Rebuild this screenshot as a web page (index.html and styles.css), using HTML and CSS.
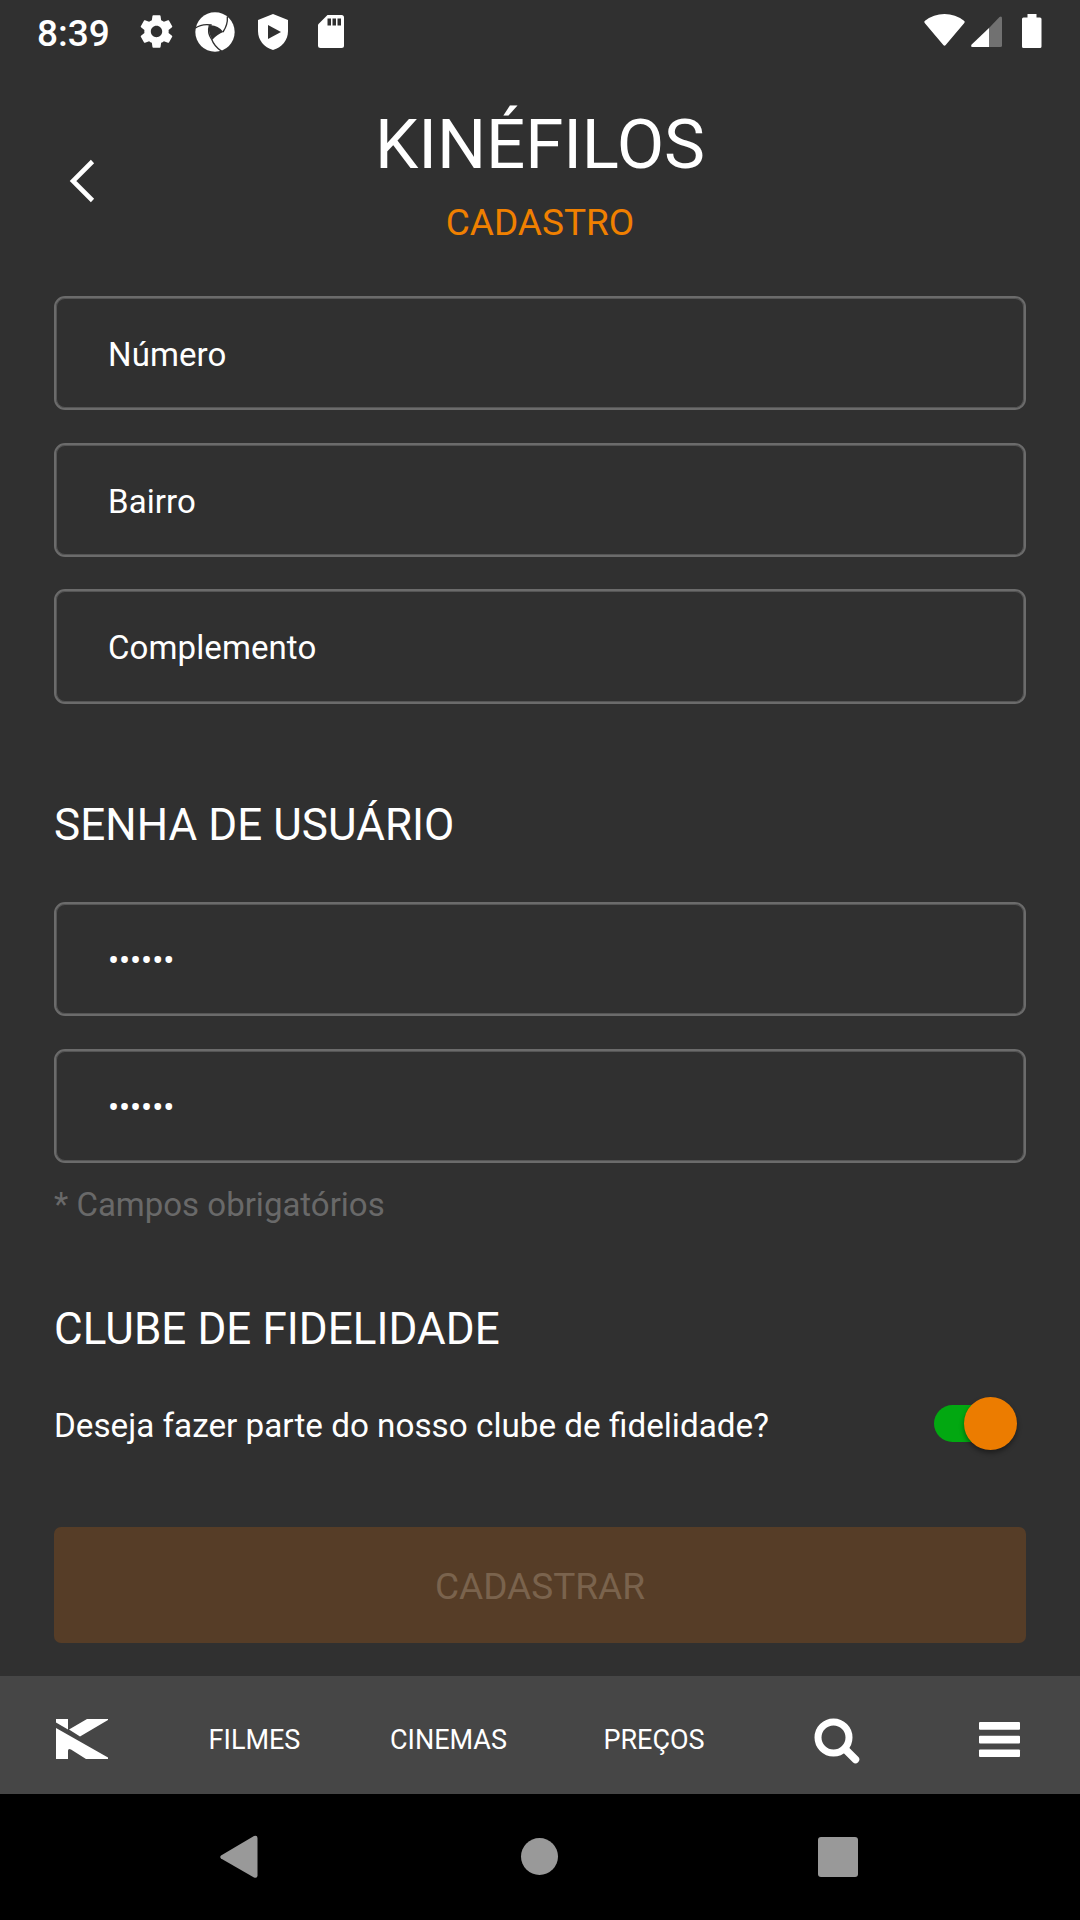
FILE: index.html
```html
<!DOCTYPE html>
<html lang="pt-BR">
<head>
<meta charset="utf-8">
<title>Kinéfilos</title>
<link rel="stylesheet" href="styles.css">
</head>
<body>
<div class="status">
  <span class="clock">8:39</span>
  <svg class="gear" width="39" height="39" viewBox="0 0 24 24"><path fill="#fff" d="M19.43 12.98c.04-.32.07-.64.07-.98s-.03-.66-.07-.98l2.11-1.65c.19-.15.24-.42.12-.64l-2-3.46c-.12-.22-.39-.3-.61-.22l-2.49 1c-.52-.4-1.08-.73-1.69-.98l-.38-2.65C14.46 2.18 14.25 2 14 2h-4c-.25 0-.46.18-.49.42l-.38 2.65c-.61.25-1.17.59-1.69.98l-2.49-1c-.23-.09-.49 0-.61.22l-2 3.46c-.13.22-.07.49.12.64l2.11 1.65c-.04.32-.07.65-.07.98s.03.66.07.98l-2.11 1.65c-.19.15-.24.42-.12.64l2 3.46c.12.22.39.3.61.22l2.49-1c.52.4 1.08.73 1.69.98l.38 2.65c.03.24.24.42.49.42h4c.25 0 .46-.18.49-.42l.38-2.65c.61-.25 1.17-.59 1.69-.98l2.49 1c.23.09.49 0 .61-.22l2-3.46c.12-.22.07-.49-.12-.64l-2.11-1.65zM12 15.5c-1.93 0-3.5-1.57-3.5-3.5s1.57-3.5 3.500-3.500 3.500 1.57 3.500 3.500-1.57 3.500-3.500 3.500z"/></svg>
  <svg class="swirl" width="40" height="40" viewBox="0 0 120 120"><circle cx="60" cy="60" r="59" fill="#fff"/><path fill="#303030" d="M43 40Q68 38 85 60Q68 66 52 83Q38 62 43 40Z"/><path fill="none" stroke="#303030" stroke-width="4" d="M0 49Q20 34 50 39M97 14Q99 38 84 60M43 40Q36 62 50 82Q58 104 80 118"/></svg>
  <svg class="shield" width="30" height="36" viewBox="0 0 30 36"><path fill="#fff" d="M15 0L30 6V17C30 26 24 33.500 15 36C6 33.500 0 26 0 17V6Z"/><path fill="#303030" d="M10 11V25L23 18Z"/></svg>
  <svg class="sd" width="26" height="33" viewBox="0 0 26 33"><path fill="#fff" d="M9.500 0H23.500Q26 0 26 2.500V30.500Q26 33 23.500 33H2.500Q0 33 0 30.500V9.500Z"/><path fill="#303030" d="M9.500 3.500h3.500v7H9.500zM14.500 3.500h3.500v7h-3.500zM19.500 3.500h3.500v7h-3.500z"/></svg>
  <svg class="wifi" width="41" height="32" viewBox="0 0 41 32"><path fill="#fff" d="M.7 9Q-.4 7.800 1 6.800Q9.500 0 20.500 0T40 6.800Q41.400 7.800 40.300 9L21.700 31Q20.500 32.300 19.300 31Z"/></svg>
  <svg class="signal" width="31" height="31" viewBox="0 0 31 31"><path fill="#717171" d="M18 31V12L28.500 1Q31-.5 31 2.500V29.500Q31 31 29.500 31Z"/><path fill="#fff" d="M18 31V12L.7 28.500Q-.8 31 1.500 31Z"/></svg>
  <svg class="battery" width="20" height="34" viewBox="0 0 20 34"><path fill="#fff" d="M5.500 0H14.500V3.500H18Q19.500 3.500 19.500 5V32.500Q19.500 34 18 34H1.500Q0 34 0 32.500V5Q0 3.500 1.500 3.500H5.500Z"/></svg>
</div>

<header class="header">
  <svg class="back" width="26" height="44" viewBox="0 0 26 44"><path fill="none" stroke="#fff" stroke-width="4.600" d="M22.500 2.500L3 22L22.500 41.500"/></svg>
  <div class="titles">
    <h1 class="title">KINÉFILOS</h1>
    <div class="subtitle">CADASTRO</div>
  </div>
</header>

<main class="form">
  <div class="fields">
    <div class="field">Número</div>
    <div class="field">Bairro</div>
    <div class="field last">Complemento</div>
  </div>
  <h2 class="heading password-heading">SENHA DE USUÁRIO</h2>
  <div class="fields">
    <div class="field secret">••••••</div>
    <div class="field secret">••••••</div>
  </div>
  <p class="note">* Campos obrigatórios</p>
  <h2 class="heading club-heading">CLUBE DE FIDELIDADE</h2>
  <div class="club">
    <span class="question">Deseja fazer parte do nosso clube de fidelidade?</span>
    <span class="switch"><span class="knob"></span></span>
  </div>
  <div class="submit">CADASTRAR</div>
</main>

<nav class="nav">
  <svg class="logo" width="52" height="40" viewBox="0 0 52 40"><path fill="#fff" d="M0 0H12V10.500L0 3.500ZM13 10.500L31 0H52V1L24 17.500ZM0 9L52 38.500V40H30L15 30.500Q12 29 12 32V40H0Z"/></svg>
  <span>FILMES</span>
  <span>CINEMAS</span>
  <span>PREÇOS</span>
  <svg class="search" width="46" height="46" viewBox="0 0 46 46"><circle cx="19.500" cy="19.500" r="15.500" fill="none" stroke="#fff" stroke-width="7"/><path stroke="#fff" stroke-width="7.500" stroke-linecap="round" d="M31 31L41.500 41.500"/></svg>
  <svg class="menu" width="41" height="35" viewBox="0 0 41 35"><g fill="#fff"><rect width="41" height="7.700" rx="1"/><rect y="13.800" width="41" height="7.700" rx="1"/><rect y="27.500" width="41" height="7.500" rx="1"/></g></svg>
</nav>

<div class="system">
  <svg width="38" height="44" viewBox="0 0 38 44"><path fill="#999" d="M1 20.500L34 1Q37.500 0 37.500 3V40.500Q37.500 43.500 34 42.500L1 23.500Q-.5 22 1 20.500Z"/></svg>
  <span class="home"></span>
  <span class="recents"></span>
</div>
</body>
</html>
```
FILE: styles.css
```css
* { box-sizing: border-box; }

body {
  margin: 0;
  width: 1080px;
  height: 1920px;
  display: flex;
  flex-direction: column;
  background: #303030;
  color: #fff;
  font-family: Roboto, "Liberation Sans", sans-serif;
  overflow: hidden;
}

svg { display: block; flex: none; overflow: visible; }

.status {
  height: 66px;
  flex: none;
  display: flex;
  align-items: flex-start;
  padding-left: 37px;
}
.clock { width: 100px; margin-top: 12px; font-size: 37px; font-weight: 500; line-height: 44px; }
.gear { margin-top: 12px; }
.swirl { margin: 12px 0 0 19px; }
.shield { margin: 14px 0 0 23px; }
.sd { margin: 15px 0 0 30px; }
.wifi { margin: 14px 0 0 580px; }
.signal { margin: 16px 0 0 6px; }
.battery { margin: 14px 0 0 20px; }

.header {
  height: 230px;
  flex: none;
  display: grid;
  grid-template-columns: 1fr auto 1fr;
  align-items: start;
}
.back { margin: 93px 0 0 70px; }
.titles { padding-top: 39px; text-align: center; }
.title { margin: 0; font-size: 69px; font-weight: 400; line-height: 80px; letter-spacing: -.1px; }
.subtitle { margin-top: 16px; font-size: 37px; line-height: 44px; color: #f08000; }

.form { flex: 1; padding: 0 54px; }
.fields { display: flex; flex-direction: column; gap: 33px; }
.field {
  height: 114px;
  display: flex;
  align-items: center;
  padding: 3px 0 0 52px;
  border: 2px solid #6b6b6b;
  border-radius: 11px;
  box-shadow: inset 0 0 0 1px #555;
  font-size: 33px;
  letter-spacing: .1px;
}
.field.last { height: 115px; margin-top: -1px; padding-top: 2px; }
.field.secret { letter-spacing: -.1px; }
.heading { margin: 0; font-size: 44px; font-weight: 400; line-height: 52px; letter-spacing: .06px; }
.password-heading { padding: 95px 0 51px; }
.note { margin: 22px 0 0; font-size: 33px; line-height: 40px; color: #696969; }
.club-heading { padding-top: 78px; }
.club {
  height: 56px;
  margin-top: 40px;
  display: flex;
  align-items: center;
  justify-content: space-between;
}
.question { padding-top: 5px; font-size: 33.25px; line-height: 40px; }
.switch {
  width: 74px;
  height: 37px;
  margin-right: 18px;
  display: flex;
  align-items: center;
  justify-content: flex-end;
  border-radius: 19px;
  background: #02a811;
}
.knob {
  flex: none;
  width: 53px;
  height: 53px;
  margin-right: -9px;
  border-radius: 50%;
  background: #ec7c00;
  box-shadow: 0 3px 5px rgba(0, 0, 0, .4);
}
.submit {
  height: 116px;
  margin-top: 76px;
  padding-top: 3px;
  display: flex;
  align-items: center;
  justify-content: center;
  border-radius: 7px;
  background: #563d27;
  color: #7a634d;
  font-size: 37px;
}

.nav {
  height: 118px;
  flex: none;
  display: grid;
  grid-template-columns: 163px 183px 205px 206px 159px 164px;
  place-items: center;
  padding-top: 9px;
  background: #464646;
  font-size: 27px;
}
.logo { margin-bottom: 1px; }
.search { margin-top: 2px; }
.menu { margin: 0 0 1px 2px; }

.system {
  height: 126px;
  flex: none;
  display: grid;
  grid-template-columns: 299px 303px 293px;
  place-items: center;
  padding: 0 0 1px 89px;
  background: #000;
}
.home { width: 37px; height: 37px; border-radius: 50%; background: #999; }
.recents { width: 40px; height: 40px; border-radius: 3px; background: #999; }
```
